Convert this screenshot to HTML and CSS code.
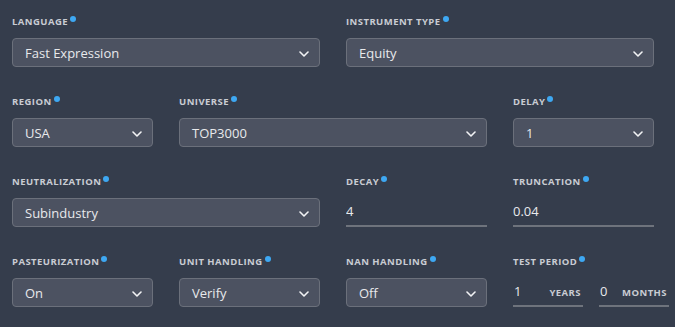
FILE: index.html
```html
<!DOCTYPE html>
<html lang="en">
<head>
    <meta charset="UTF-8">
    <meta name="viewport" content="width=device-width, initial-scale=1.0">
    <title>Simulation Settings</title>
    <link rel="stylesheet" href="styles.css">
</head>
<body>
    <div class="settings">
        <div class="field span-2">
            <label class="label">Language<span class="dot"></span></label>
            <div class="select"><span>Fast Expression</span><svg class="chev" viewBox="0 0 10 6"><path d="M1 1 L5 5 L9 1"/></svg></div>
        </div>
        <div class="field span-2">
            <label class="label">Instrument Type<span class="dot"></span></label>
            <div class="select"><span>Equity</span><svg class="chev" viewBox="0 0 10 6"><path d="M1 1 L5 5 L9 1"/></svg></div>
        </div>

        <div class="field">
            <label class="label">Region<span class="dot"></span></label>
            <div class="select"><span>USA</span><svg class="chev" viewBox="0 0 10 6"><path d="M1 1 L5 5 L9 1"/></svg></div>
        </div>
        <div class="field span-2">
            <label class="label">Universe<span class="dot"></span></label>
            <div class="select"><span>TOP3000</span><svg class="chev" viewBox="0 0 10 6"><path d="M1 1 L5 5 L9 1"/></svg></div>
        </div>
        <div class="field">
            <label class="label">Delay<span class="dot"></span></label>
            <div class="select"><span>1</span><svg class="chev" viewBox="0 0 10 6"><path d="M1 1 L5 5 L9 1"/></svg></div>
        </div>

        <div class="field span-2">
            <label class="label">Neutralization<span class="dot"></span></label>
            <div class="select"><span>Subindustry</span><svg class="chev" viewBox="0 0 10 6"><path d="M1 1 L5 5 L9 1"/></svg></div>
        </div>
        <div class="field">
            <label class="label">Decay<span class="dot"></span></label>
            <input class="line-input" type="text" value="4">
        </div>
        <div class="field">
            <label class="label">Truncation<span class="dot"></span></label>
            <input class="line-input" type="text" value="0.04">
        </div>

        <div class="field">
            <label class="label">Pasteurization<span class="dot"></span></label>
            <div class="select"><span>On</span><svg class="chev" viewBox="0 0 10 6"><path d="M1 1 L5 5 L9 1"/></svg></div>
        </div>
        <div class="field">
            <label class="label">Unit Handling<span class="dot"></span></label>
            <div class="select"><span>Verify</span><svg class="chev" viewBox="0 0 10 6"><path d="M1 1 L5 5 L9 1"/></svg></div>
        </div>
        <div class="field">
            <label class="label">NaN Handling<span class="dot"></span></label>
            <div class="select"><span>Off</span><svg class="chev" viewBox="0 0 10 6"><path d="M1 1 L5 5 L9 1"/></svg></div>
        </div>
        <div class="field">
            <label class="label">Test Period<span class="dot"></span></label>
            <div class="period">
                <div class="period-part">
                    <span class="period-value">1</span>
                    <span class="unit">Years</span>
                </div>
                <div class="period-part">
                    <span class="period-value">0</span>
                    <span class="unit">Months</span>
                </div>
            </div>
        </div>
    </div>
</body>
</html>
```

FILE: styles.css
```css
body {
    margin: 0;
    background-color: #353d4c;
    font-family: "Open Sans", "Noto Sans", sans-serif;
    color: #e6e8ec;
    overflow: hidden;
}

.settings {
    display: grid;
    grid-template-columns: repeat(4, 141px);
    column-gap: 26px;
    row-gap: 28px;
    padding: 15px 0 0 12px;
}

.field {
    display: flex;
    flex-direction: column;
    gap: 9px;
    min-width: 0;
}

.span-2 {
    grid-column: span 2;
}

.label {
    display: block;
    height: 14px;
    line-height: 14px;
    font-size: 9.5px;
    font-weight: 700;
    letter-spacing: 0.45px;
    text-transform: uppercase;
    color: #c9ccd3;
    white-space: nowrap;
}

.dot {
    display: inline-block;
    width: 6px;
    height: 6px;
    margin-left: 2px;
    border-radius: 50%;
    background-color: #3ea8f2;
    vertical-align: top;
    margin-top: 1px;
}

.select {
    height: 29px;
    box-sizing: border-box;
    display: flex;
    align-items: center;
    justify-content: space-between;
    padding: 0 10px 0 12px;
    background-color: #4c5261;
    border: 1px solid #6b707b;
    border-radius: 4px;
    font-size: 13px;
    color: #e8e9ec;
}

.chev {
    width: 10px;
    height: 6px;
    margin-top: 2px;
    fill: none;
    stroke: #f2f3f5;
    stroke-width: 1.6;
    stroke-linecap: round;
    stroke-linejoin: round;
}

.line-input {
    height: 29px;
    box-sizing: border-box;
    width: 100%;
    margin: 0;
    padding: 0 0 2px 0;
    background: transparent;
    border: none;
    border-bottom: 2px solid #6e737c;
    font-family: inherit;
    font-size: 13px;
    color: #e8e9ec;
    outline: none;
}

.period {
    display: flex;
    gap: 16px;
    width: 156px;
}

.period-part {
    width: 70px;
    height: 29px;
    box-sizing: border-box;
    flex: none;
    display: flex;
    align-items: center;
    justify-content: space-between;
    padding: 0 2px 2px 1px;
    border-bottom: 2px solid #6e737c;
}

.period-value {
    font-size: 13px;
    color: #e8e9ec;
}

.unit {
    font-size: 9.5px;
    font-weight: 700;
    letter-spacing: 0.45px;
    text-transform: uppercase;
    color: #c9ccd3;
    margin-top: 3px;
}
```
